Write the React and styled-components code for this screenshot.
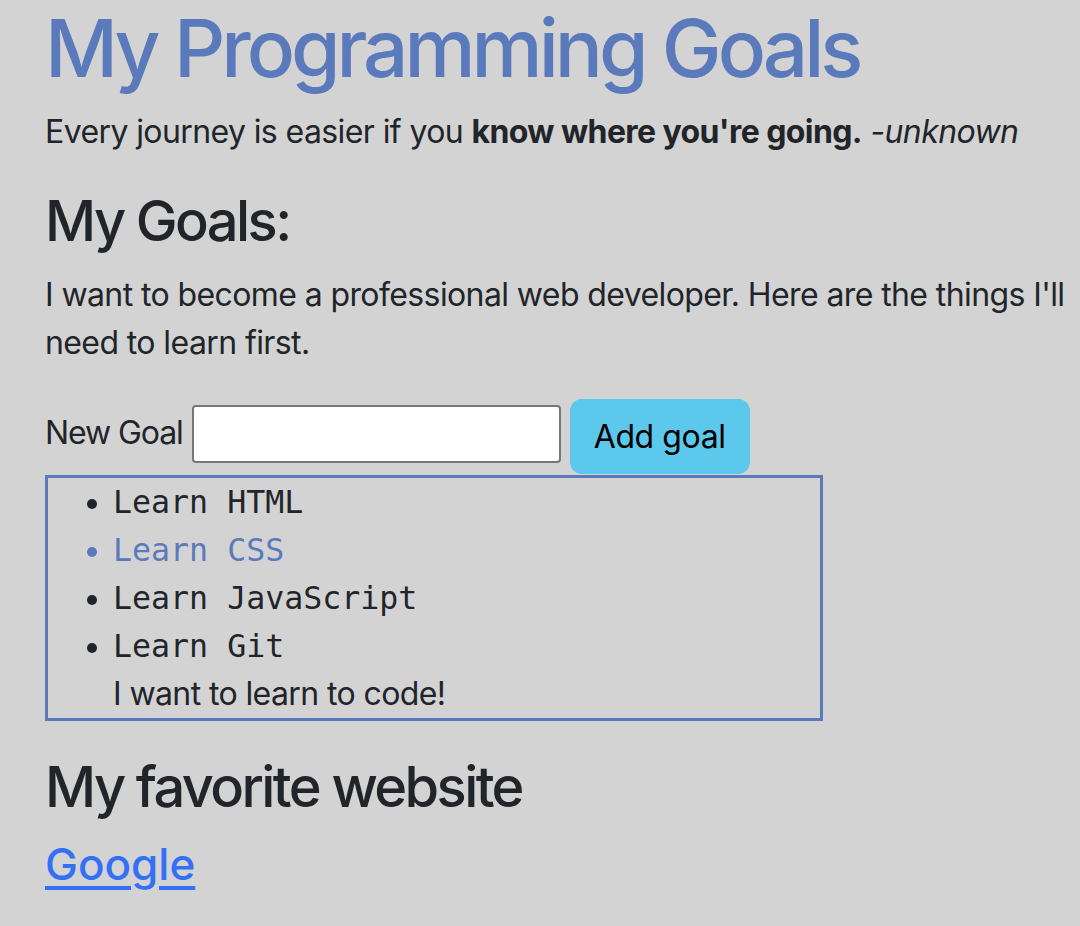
import React from "react";
import styled, { createGlobalStyle } from "styled-components";

const GlobalStyle = createGlobalStyle`
  html, body { margin: 0; padding: 0; }
  body {
    background: #d3d3d3;
    color: #212529;
    font-family: Inter, "Noto Sans", sans-serif;
    font-size: 32px;
    line-height: 48px;
    letter-spacing: -0.6px;
  }
  * { box-sizing: border-box; }
`;

const Page = styled.main`
  padding: 0 0 0 45px;
  width: 1080px;
`;

const Title = styled.h1`
  margin: 0 0 12px;
  font-size: 80px;
  line-height: 96px;
  font-weight: 500;
  color: #5a7abb;
  letter-spacing: -4px;
`;

const Text = styled.p`
  margin: 0 0 32px;
`;

const Heading = styled.h3`
  margin: 0 0 16px;
  font-size: 56px;
  line-height: 67px;
  font-weight: 500;
  letter-spacing: -2.6px;
`;

const GoalForm = styled.form`
  display: flex;
  align-items: flex-start;
  gap: 9px;
  margin: 0;
`;

const Label = styled.label`
  margin-top: 10px;
  letter-spacing: -1.1px;
`;

const GoalInput = styled.input`
  margin-top: 6px;
  width: 369px;
  height: 58px;
  border: 2px solid #767676;
  border-radius: 4px;
  background: #fff;
  font: inherit;
  padding: 0 8px;
`;

const AddButton = styled.button`
  width: 180px;
  height: 75px;
  border: none;
  border-radius: 12px;
  background: #5cc8ec;
  color: #000;
  font-family: Inter, "Noto Sans", sans-serif;
  font-size: 32px;
  line-height: 48px;
  letter-spacing: -0.4px;
  padding: 0;
  cursor: pointer;
`;

const GoalList = styled.ul`
  width: 778px;
  margin: 1px 0 33px 0;
  padding: 0 0 0 65px;
  border: 3px solid #5a7abb;
`;

const Goal = styled.li`
  font-family: "DejaVu Sans Mono", "Liberation Mono", monospace;
  font-size: 31.6px;
  line-height: 48px;
  letter-spacing: 0;
  color: ${(p) => (p.$active ? "#5a7abb" : "#212529")};
`;

const Note = styled.li`
  list-style: none;
  font-family: Inter, "Noto Sans", sans-serif;
`;

const SiteLink = styled.a`
  display: inline-block;
  margin-top: 1px;
  font-size: 44px;
  line-height: 53px;
  font-weight: 500;
  letter-spacing: 0;
  color: #3370f6;
  text-decoration: underline;
  text-decoration-thickness: 4px;
  text-underline-offset: 6px;
`;

const goals = [
  { text: "Learn HTML" },
  { text: "Learn CSS", active: true },
  { text: "Learn JavaScript" },
  { text: "Learn Git" },
];

export default function App() {
  return (
    <>
      <GlobalStyle />
      <Page>
        <Title>My Programming Goals</Title>
        <Text>
          Every journey is easier if you <strong>know where you're going.</strong>{" "}
          <em>-unknown</em>
        </Text>
        <Heading>My Goals:</Heading>
        <Text>
          I want to become a professional web developer. Here are the things I'll
          need to learn first.
        </Text>
        <GoalForm onSubmit={(e) => e.preventDefault()}>
          <Label htmlFor="goal">New Goal</Label>
          <GoalInput id="goal" type="text" />
          <AddButton type="submit">Add goal</AddButton>
        </GoalForm>
        <GoalList>
          {goals.map((g) => (
            <Goal key={g.text} $active={g.active}>
              {g.text}
            </Goal>
          ))}
          <Note>I want to learn to code!</Note>
        </GoalList>
        <Heading>My favorite website</Heading>
        <SiteLink href="https://www.google.com">Google</SiteLink>
      </Page>
    </>
  );
}
